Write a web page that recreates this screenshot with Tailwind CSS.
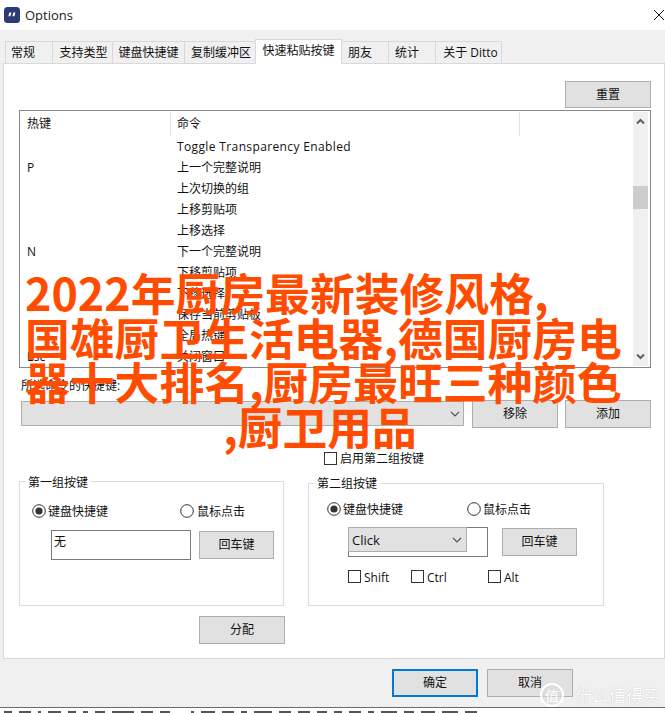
<!DOCTYPE html>
<html lang="zh-CN">
<head>
<meta charset="utf-8">
<script src="https://cdn.jsdelivr.net/npm/@tailwindcss/browser@4"></script>
</head>
<body class="m-0 bg-white">
<div class="relative w-[665px] h-[713px] overflow-hidden bg-white flex flex-col text-[12px] leading-[16px] text-[#111] font-['Open_Sans','Noto_Sans_CJK_SC',sans-serif]">

  <!-- title bar -->
  <div class="h-[30px] flex items-center pl-[4px] pr-[1px] shrink-0">
    <svg class="w-[16px] h-[16px]" viewBox="0 0 16 16"><rect width="16" height="16" rx="3.5" fill="#2e3a75"/><path d="M5.4 5.6h2l-1 3.6h-2zM9.4 5.6h2l-1 3.6h-2z" fill="#fff"/></svg>
    <span class="ml-[5px] text-[13px] text-[#222]">Options</span>
    <svg class="ml-auto w-[10px] h-[10px]" viewBox="0 0 10 10"><path d="M0 0L10 10M10 0L0 10" stroke="#111" stroke-width="1"/></svg>
  </div>

  <!-- dialog body -->
  <div class="h-[677px] shrink-0 bg-[#f0f0f0] flex flex-col pl-[3px]">
    <!-- tabs -->
    <div class="h-[33px] shrink-0 flex items-end pl-[2px]">
      <div class="w-[47px] h-[22px] border border-b-0 border-r-0 border-[#d9d9d9] flex items-center justify-center pr-[12px]">常规</div>
      <div class="w-[60px] h-[22px] border border-b-0 border-r-0 border-[#d9d9d9] flex items-center justify-center pl-[2px]">支持类型</div>
      <div class="w-[72px] h-[22px] border border-b-0 border-r-0 border-[#d9d9d9] flex items-center justify-center">键盘快捷键</div>
      <div class="w-[71px] h-[22px] border border-b-0 border-r-0 border-[#d9d9d9] flex items-center justify-center pl-[2px]">复制缓冲区</div>
      <div class="relative z-10 w-[87px] h-[25px] -mb-px bg-white border border-b-0 border-[#d9d9d9] flex items-center justify-center pb-[2px]">快速粘贴按键</div>
      <div class="w-[46px] h-[22px] border border-b-0 border-l-0 border-r-0 border-[#d9d9d9] flex items-center justify-center pr-[10px]">朋友</div>
      <div class="w-[48px] h-[22px] border border-b-0 border-[#d9d9d9] flex items-center justify-center pr-[10px]">统计</div>
      <div class="w-[66px] h-[22px] border border-b-0 border-l-0 border-[#d9d9d9] flex items-center justify-center pl-[4px]">关于 Ditto</div>
    </div>

    <!-- panel -->
    <div class="w-[662px] h-[596px] shrink-0 bg-white border border-[#d9d9d9] flex flex-col pl-[15px]">
      <div class="w-[632px] mt-[17px] flex justify-end">
        <div class="w-[86px] h-[27px] bg-[#e1e1e1] border border-[#adadad] flex items-center justify-center">重置</div>
      </div>

      <!-- list -->
      <div class="w-[632px] h-[258px] mt-[2px] border border-[#828790] flex shrink-0">
        <div class="w-[613px] flex flex-col">
          <div class="h-[25px] flex shrink-0">
            <div class="w-[150px] h-[24px] mt-px pl-[7px] flex items-center">热键</div>
            <div class="w-[350px] h-[24px] mt-px pl-[6px] flex items-center border-x border-[#e5e5e5]">命令</div>
          </div>
          <div class="grid grid-cols-[150px_1fr] auto-rows-[21px] items-center">
            <div class="pl-[7px]"></div><div class="pl-[7px] tracking-[0.37px]">Toggle Transparency Enabled</div>
            <div class="pl-[7px]">P</div><div class="pl-[7px]">上一个完整说明</div>
            <div class="pl-[7px]"></div><div class="pl-[7px]">上次切换的组</div>
            <div class="pl-[7px]"></div><div class="pl-[7px]">上移剪贴项</div>
            <div class="pl-[7px]"></div><div class="pl-[7px]">上移选择</div>
            <div class="pl-[7px]">N</div><div class="pl-[7px]">下一个完整说明</div>
            <div class="pl-[7px]"></div><div class="pl-[7px]">下移剪贴项</div>
            <div class="pl-[7px]"></div><div class="pl-[7px]">下移选择</div>
            <div class="pl-[7px]"></div><div class="pl-[7px]">保存当前剪贴板</div>
            <div class="pl-[7px]"></div><div class="pl-[7px]">全局热键</div>
            <div class="pl-[7px]">Esc</div><div class="pl-[7px]">关闭窗口</div>
          </div>
        </div>
        <div class="w-[15px] my-px bg-[#f0f0f0] flex flex-col shrink-0">
          <svg class="w-[15px] h-[18px] shrink-0" viewBox="0 0 15 18"><path d="M4 11.5L7.5 8L11 11.5" fill="none" stroke="#606060" stroke-width="2"/></svg>
          <div class="w-[15px] h-[23px] mt-[56px] bg-[#cdcdcd] shrink-0"></div>
          <svg class="mt-auto w-[15px] h-[18px] shrink-0" viewBox="0 0 15 18"><path d="M4 6.5L7.5 10L11 6.5" fill="none" stroke="#606060" stroke-width="2"/></svg>
        </div>
      </div>

      <div class="mt-[10px] ml-[2px] h-[16px]">所选命令的快捷键:</div>

      <div class="mt-[6px] ml-[2px] flex items-start">
        <div class="w-[443px] h-[25px] mt-px bg-[#e1e1e1] border border-[#adadad] flex items-center justify-end pr-[3px]">
          <svg class="w-[10px] h-[6px]" viewBox="0 0 10 6"><path d="M1 1L5 5L9 1" fill="none" stroke="#555" stroke-width="1.2"/></svg>
        </div>
        <div class="ml-[8px] w-[86px] h-[28px] bg-[#e1e1e1] border border-[#adadad] flex items-center justify-center">移除</div>
        <div class="ml-[7px] w-[86px] h-[28px] bg-[#e1e1e1] border border-[#adadad] flex items-center justify-center">添加</div>
      </div>

      <div class="mt-[24px] ml-[305px] flex items-center h-[13px]">
        <div class="w-[13px] h-[13px] border border-[#333] bg-white"></div>
        <span class="ml-[3px] whitespace-nowrap">启用第二组按键</span>
      </div>

      <!-- groups -->
      <div class="mt-[16px] flex items-end">
        <div class="relative w-[265px] h-[125px] border border-[#dcdcdc] flex flex-col pt-[22px] pl-[12px] shrink-0">
          <span class="absolute left-[5px] -top-[7px] px-[3px] bg-white">第一组按键</span>
          <div class="flex items-center h-[14px]">
            <svg class="w-[14px] h-[14px] shrink-0" viewBox="0 0 14 14"><circle cx="7" cy="7" r="6.3" fill="#fff" stroke="#333"/><circle cx="7" cy="7" r="3.6" fill="#333"/></svg>
            <span class="ml-[2px] mt-[2px] w-[132px]">键盘快捷键</span>
            <svg class="w-[14px] h-[14px] shrink-0" viewBox="0 0 14 14"><circle cx="7" cy="7" r="6.3" fill="#fff" stroke="#333"/></svg>
            <span class="ml-[3px] mt-[2px]">鼠标点击</span>
          </div>
          <div class="mt-[12px] ml-[19px] flex items-center">
            <div class="w-[140px] h-[30px] border border-[#7a7a7a] pl-[2px] pt-[3px]">无</div>
            <div class="ml-[8px] w-[75px] h-[28px] bg-[#e1e1e1] border border-[#adadad] flex items-center justify-center">回车键</div>
          </div>
        </div>

        <div class="relative ml-[24px] w-[296px] h-[123px] border border-[#dcdcdc] flex flex-col pt-[18px] pl-[18px] shrink-0">
          <span class="absolute left-[5px] -top-[8px] px-[3px] bg-white">第二组按键</span>
          <div class="flex items-center h-[14px]">
            <svg class="w-[14px] h-[14px] shrink-0" viewBox="0 0 14 14"><circle cx="7" cy="7" r="6.3" fill="#fff" stroke="#333"/><circle cx="7" cy="7" r="3.6" fill="#333"/></svg>
            <span class="ml-[2px] mt-[2px] w-[124px]">键盘快捷键</span>
            <svg class="w-[14px] h-[14px] shrink-0" viewBox="0 0 14 14"><circle cx="7" cy="7" r="6.3" fill="#fff" stroke="#333"/></svg>
            <span class="ml-[2px] mt-[2px]">鼠标点击</span>
          </div>
          <div class="mt-[11px] ml-[21px] flex items-center">
            <div class="w-[140px] h-[30px] border border-[#7a7a7a]">
              <div class="-mt-px -ml-px w-[119px] h-[25px] bg-[#e1e1e1] border border-[#adadad] flex items-center justify-between pl-[3px] pr-[4px] text-[13px]">
                <span>Click</span>
                <svg class="w-[10px] h-[6px]" viewBox="0 0 10 6"><path d="M1 1L5 5L9 1" fill="none" stroke="#555" stroke-width="1.2"/></svg>
              </div>
            </div>
            <div class="ml-[14px] w-[75px] h-[28px] bg-[#e1e1e1] border border-[#adadad] flex items-center justify-center">回车键</div>
          </div>
          <div class="mt-[13px] ml-[21px] flex items-center h-[13px]">
            <div class="w-[13px] h-[13px] border border-[#333] shrink-0"></div>
            <span class="ml-[3px] mt-[2px] w-[47px]">Shift</span>
            <div class="w-[13px] h-[13px] border border-[#333] shrink-0"></div>
            <span class="ml-[3px] mt-[2px] w-[61px]">Ctrl</span>
            <div class="w-[13px] h-[13px] border border-[#333] shrink-0"></div>
            <span class="ml-[3px] mt-[2px]">Alt</span>
          </div>
        </div>
      </div>

      <div class="mt-[10px] ml-[180px] w-[86px] h-[28px] bg-[#e1e1e1] border border-[#adadad] flex items-center justify-center">分配</div>
    </div>

    <!-- footer buttons -->
    <div class="mt-[10px] ml-[389px] flex shrink-0">
      <div class="w-[86px] h-[28px] bg-[#e1e1e1] border-2 border-[#0078d7] flex items-center justify-center">确定</div>
      <div class="ml-[9px] w-[86px] h-[28px] bg-[#e1e1e1] border border-[#adadad] flex items-center justify-center">取消</div>
    </div>
  </div>

  <!-- article text below, cut off -->
  <div class="h-[6px] shrink-0 border-t border-[#6a6a6a] bg-white flex items-end gap-[7px] pl-[4px]">
    <div class="w-[8px] h-[2px] bg-[#555]"></div><div class="w-[12px] h-[2px] bg-[#555]"></div><div class="w-[3px] h-[2px] bg-[#555]"></div><div class="w-[13px] h-[2px] bg-[#555]"></div><div class="w-[8px] h-[2px] bg-[#555]"></div><div class="w-[5px] h-[2px] bg-[#555]"></div><div class="w-[10px] h-[2px] bg-[#555]"></div><div class="w-[22px] h-[2px] bg-[#555]"></div><div class="w-[12px] h-[2px] bg-[#555]"></div><div class="w-[10px] h-[2px] bg-[#555]"></div><div class="ml-[14px] w-[3px] h-[2px] bg-[#555]"></div><div class="w-[14px] h-[2px] bg-[#555]"></div><div class="w-[12px] h-[2px] bg-[#555]"></div><div class="w-[6px] h-[2px] bg-[#555]"></div><div class="w-[18px] h-[2px] bg-[#555]"></div><div class="w-[12px] h-[2px] bg-[#555]"></div><div class="w-[12px] h-[2px] bg-[#555]"></div><div class="w-[10px] h-[2px] bg-[#555]"></div><div class="w-[8px] h-[2px] bg-[#555]"></div><div class="w-[12px] h-[2px] bg-[#555]"></div><div class="w-[6px] h-[2px] bg-[#555]"></div><div class="w-[16px] h-[2px] bg-[#555]"></div><div class="w-[10px] h-[2px] bg-[#555]"></div><div class="w-[14px] h-[2px] bg-[#555]"></div><div class="w-[16px] h-[2px] bg-[#555]"></div><div class="w-[12px] h-[2px] bg-[#555]"></div>
  </div>

  <!-- orange headline over the screenshot -->
  <div class="absolute left-[25px] top-[270px] w-[590px] flex flex-col text-[44.8px] leading-[44.5px] font-bold text-[#ff4c00] whitespace-nowrap font-['Noto_Sans_CJK_SC',sans-serif]">
    <div>2022年厨房最新装修风格,</div>
    <div>国雄厨卫生活电器,德国厨房电</div>
    <div>器十大排名,厨房最旺三种颜色</div>
    <div class="text-center">,厨卫用品</div>
  </div>

  <!-- watermark -->
  <div class="absolute left-[540px] top-[683px] flex items-center">
    <div class="w-[24px] h-[24px] rounded-full border-2 border-white bg-[#d8d8d8]/60 flex items-center justify-center text-[14px] leading-[14px] text-white font-['Noto_Sans_CJK_SC',sans-serif]">值</div>
    <span class="ml-[11px] text-[17px] leading-[24px] text-white [text-shadow:0_0_1px_#aaa] whitespace-nowrap font-['Noto_Sans_CJK_SC',sans-serif]">什么值得买</span>
  </div>
</div>
</body>
</html>
